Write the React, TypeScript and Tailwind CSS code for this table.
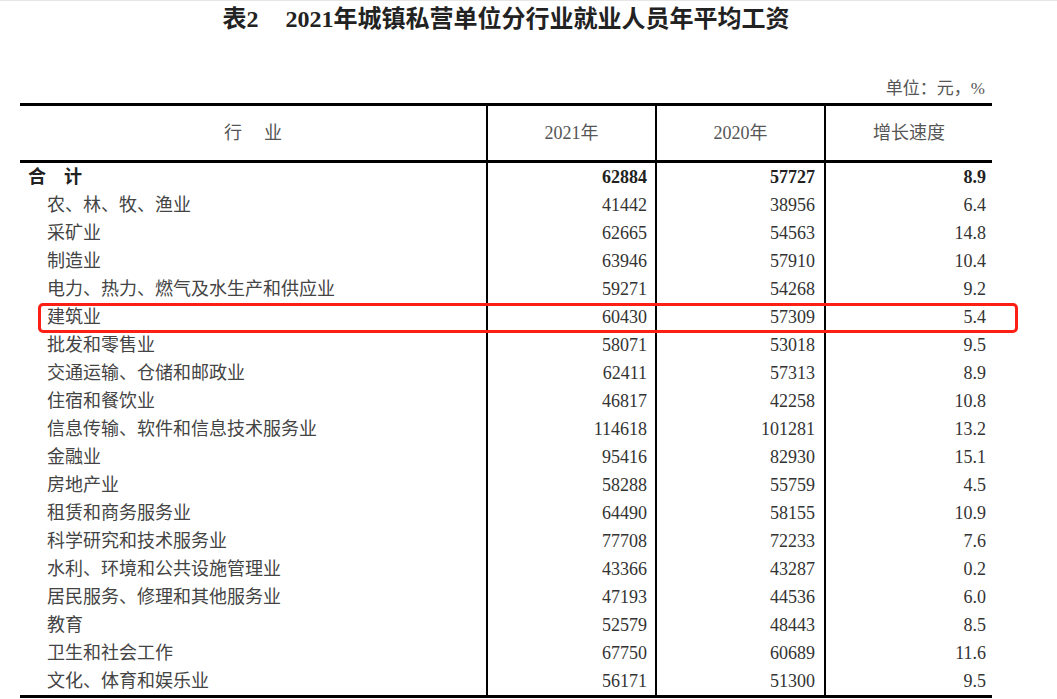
const rows = [
  { name: "农、林、牧、渔业", y2021: "41442", y2020: "38956", growth: "6.4" },
  { name: "采矿业", y2021: "62665", y2020: "54563", growth: "14.8" },
  { name: "制造业", y2021: "63946", y2020: "57910", growth: "10.4" },
  { name: "电力、热力、燃气及水生产和供应业", y2021: "59271", y2020: "54268", growth: "9.2" },
  { name: "建筑业", y2021: "60430", y2020: "57309", growth: "5.4" },
  { name: "批发和零售业", y2021: "58071", y2020: "53018", growth: "9.5" },
  { name: "交通运输、仓储和邮政业", y2021: "62411", y2020: "57313", growth: "8.9" },
  { name: "住宿和餐饮业", y2021: "46817", y2020: "42258", growth: "10.8" },
  { name: "信息传输、软件和信息技术服务业", y2021: "114618", y2020: "101281", growth: "13.2" },
  { name: "金融业", y2021: "95416", y2020: "82930", growth: "15.1" },
  { name: "房地产业", y2021: "58288", y2020: "55759", growth: "4.5" },
  { name: "租赁和商务服务业", y2021: "64490", y2020: "58155", growth: "10.9" },
  { name: "科学研究和技术服务业", y2021: "77708", y2020: "72233", growth: "7.6" },
  { name: "水利、环境和公共设施管理业", y2021: "43366", y2020: "43287", growth: "0.2" },
  { name: "居民服务、修理和其他服务业", y2021: "47193", y2020: "44536", growth: "6.0" },
  { name: "教育", y2021: "52579", y2020: "48443", growth: "8.5" },
  { name: "卫生和社会工作", y2021: "67750", y2020: "60689", growth: "11.6" },
  { name: "文化、体育和娱乐业", y2021: "56171", y2020: "51300", growth: "9.5" },
]

const cols = "grid grid-cols-[466px_169px_169px_168px]"

export default function App() {
  return (
    <div
      className="relative w-[1057px] h-[699px] overflow-hidden bg-white border-t border-[#e6e6e6] text-[#333]"
      style={{ fontFamily: '"Liberation Serif", "Noto Sans CJK SC", serif' }}
    >
      <div className="ml-[20px] w-[972px]">
        {/* Title */}
        <div className="mt-[3px] h-[30px] leading-[30px] text-center text-[24px] font-bold text-[#222]">
          表2<span className="ml-[27px]">2021年城镇私营单位分行业就业人员年平均工资</span>
        </div>

        {/* Unit */}
        <div className="mt-[43px] h-[24px] leading-[24px] pr-[7px] text-right text-[17px] text-[#555]">
          单位：元，%
        </div>

        {/* Table */}
        <div className="mt-[2px] border-t-[3px] border-b-[3px] border-black text-[18px]">
          <div className={`${cols} h-[57px] border-b-[3px] border-black text-[#555]`}>
            <div className="flex items-center justify-center gap-[22px]">
              <span>行</span>
              <span>业</span>
            </div>
            <div className="flex items-center justify-center border-l-2 border-black">2021年</div>
            <div className="flex items-center justify-center border-l-2 border-black">2020年</div>
            <div className="flex items-center justify-center border-l-2 border-black">增长速度</div>
          </div>

          <div className={`${cols} h-[28px] leading-[28px] font-bold text-[#222]`}>
            <div className="pl-[8px]">合　计</div>
            <div className="border-l-2 border-black pr-[8px] text-right">62884</div>
            <div className="border-l-2 border-black pr-[9px] text-right">57727</div>
            <div className="border-l-2 border-black pr-[6px] text-right">8.9</div>
          </div>

          {rows.map((row) => (
            <div key={row.name} className={`${cols} h-[28px] leading-[28px]`}>
              <div className="pl-[27px] text-[#444]">{row.name}</div>
              <div className="border-l-2 border-black pr-[8px] text-right">{row.y2021}</div>
              <div className="border-l-2 border-black pr-[9px] text-right">{row.y2020}</div>
              <div className="border-l-2 border-black pr-[6px] text-right">{row.growth}</div>
            </div>
          ))}
        </div>
      </div>

      {/* highlight around 建筑业 */}
      <div className="absolute left-[38px] top-[302px] w-[980px] h-[30px] rounded-[5px] border-[3px] border-[#fd1f14]" />
    </div>
  )
}
